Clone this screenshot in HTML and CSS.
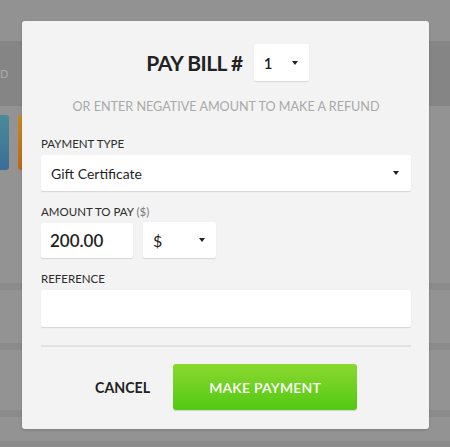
FILE: index.html
```html
<!DOCTYPE html>
<html>
<head>
<meta charset="utf-8">
<link rel="stylesheet" href="styles.css">
</head>
<body>
<div class="bg">
  <div class="bg-top"></div>
  <div class="bg-band"><span class="bg-d">D</span></div>
  <div class="bg-cards">
    <div class="card card-blue"></div>
    <div class="card card-orange"></div>
  </div>
  <div class="bg-row r1"></div>
  <div class="bg-line"></div>
  <div class="bg-row r2"></div>
  <div class="bg-line"></div>
  <div class="bg-row r3"></div>
  <div class="bg-line"></div>
  <div class="bg-row r4"></div>
  <div class="bg-line"></div>
  <div class="bg-minibar">MINIBAR</div>
</div>

<div class="modal">
  <div class="title-row">
    <h1 class="title">PAY BILL #</h1>
    <div class="select small-select"><span>1</span><i class="caret"></i></div>
  </div>
  <p class="hint">OR ENTER NEGATIVE AMOUNT TO MAKE A REFUND</p>

  <label class="label">PAYMENT TYPE</label>
  <div class="select wide-select"><span>Gift Certificate</span><i class="caret"></i></div>

  <label class="label">AMOUNT TO PAY <span class="muted">($)</span></label>
  <div class="amount-row">
    <div class="input amount-input">200.00</div>
    <div class="select cur-select"><span>$</span><i class="caret"></i></div>
  </div>

  <label class="label">REFERENCE</label>
  <div class="input ref-input"></div>

  <div class="divider"></div>

  <div class="actions">
    <button class="btn-cancel">CANCEL</button>
    <button class="btn-pay">MAKE PAYMENT</button>
  </div>
</div>
</body>
</html>
```
FILE: styles.css
```css
* { box-sizing: border-box; }
html, body { margin: 0; padding: 0; }
body {
  width: 450px;
  height: 447px;
  overflow: hidden;
  background: #939393;
  font-family: "Source Sans Pro", Lato, "Liberation Sans", sans-serif;
  position: relative;
}
.bg { display: flex; flex-direction: column; }
.bg-top { height: 41px; background: #929292; }
.bg-band {
  height: 65px;
  background: #858585;
  display: flex;
  align-items: center;
}
.bg-d { color: #a7a7a7; font-size: 11px; font-weight: 600; }
.bg-cards {
  height: 117px;
  display: flex;
  gap: 9px;
  padding-top: 9px;
  align-items: flex-start;
}
.card { height: 55px; }
.card-blue { background: linear-gradient(#4a8b9a, #3a6d97); width: 9px; border-radius: 0 3px 3px 0; }
.card-orange { background: linear-gradient(#c98a22, #b86a1a); width: 10px; border-radius: 3px 0 0 3px; }
.bg-row { background: #939393; }
.r1 { height: 60px; }
.r2 { height: 53px; }
.r3 { height: 60px; }
.r4 { height: 24px; }
.bg-line { height: 7px; background: #8b8b8b; }
.bg-minibar {
  margin-left: 77px;
  margin-top: -1px;
  font-size: 12px;
  line-height: 14px;
  color: #2a2a2a;
  font-weight: 600;
  letter-spacing: 0.5px;
}

.modal {
  position: absolute;
  left: 22px;
  top: 21px;
  width: 407px;
  height: 408px;
  background: #f3f3f3;
  border-radius: 3px;
  padding: 23px 18px 0 19px;
  box-shadow: 0 1px 3px rgba(0,0,0,0.15);
  display: flex;
  flex-direction: column;
}
.title-row {
  display: flex;
  justify-content: center;
  align-items: center;
  gap: 11px;
  padding-left: 3px;
}
.title {
  margin: 0;
  font-size: 21px;
  font-weight: 700;
  color: #222;
  letter-spacing: -0.5px;
}
.select, .input {
  background: #fff;
  box-shadow: 0 1px 1px rgba(0,0,0,0.12);
  border-radius: 2px;
  display: flex;
  align-items: center;
  color: #1f1f1f;
}
.select { justify-content: space-between; }
.caret {
  width: 0; height: 0;
  border-left: 3px solid transparent;
  border-right: 3px solid transparent;
  border-top: 4px solid #222;
}
.small-select {
  width: 55px;
  height: 37px;
  padding: 0 11px 0 10px;
  font-size: 15px;
  font-weight: 600;
}
.hint {
  margin: 18px 0 9px;
  text-align: center;
  color: #a9a9a9;
  font-size: 12.6px;
  letter-spacing: 0;
}
.label {
  display: block;
  font-size: 11.5px;
  line-height: 13px;
  color: #2c2c2c;
  margin-top: 14px;
  margin-bottom: 5px;
}
.muted { color: #7a7a7a; }
.wide-select {
  height: 36px;
  padding: 0 12px 0 10px;
  font-size: 14px;
}
.amount-row { display: flex; gap: 10px; height: 35px; }
.amount-input {
  width: 92px;
  height: 35px;
  padding-left: 9px;
  font-size: 17px;
  font-weight: 600;
}
.cur-select {
  width: 73px;
  height: 36px;
  margin-top: -1px;
  padding: 0 11px 0 10px;
  font-size: 16px;
}
.ref-input { height: 37px; }
.divider {
  height: 2px;
  background: #e2e2e2;
  margin-top: 18px;
}
.actions {
  display: flex;
  align-items: center;
  margin-top: 17px;
  padding-left: 54px;
  gap: 23px;
}
.btn-cancel {
  background: none;
  border: none;
  padding: 0;
  font-family: inherit;
  font-size: 14.2px;
  font-weight: 700;
  color: #222;
}
.btn-pay {
  width: 184px;
  height: 46px;
  border: none;
  border-radius: 3px;
  background: linear-gradient(#8bd92f, #53c813);
  box-shadow: 0 1px 1px rgba(0,0,0,0.15);
  color: #fff;
  font-family: inherit;
  font-size: 14px;
  font-weight: 600;
  letter-spacing: 0.2px;
}
```
